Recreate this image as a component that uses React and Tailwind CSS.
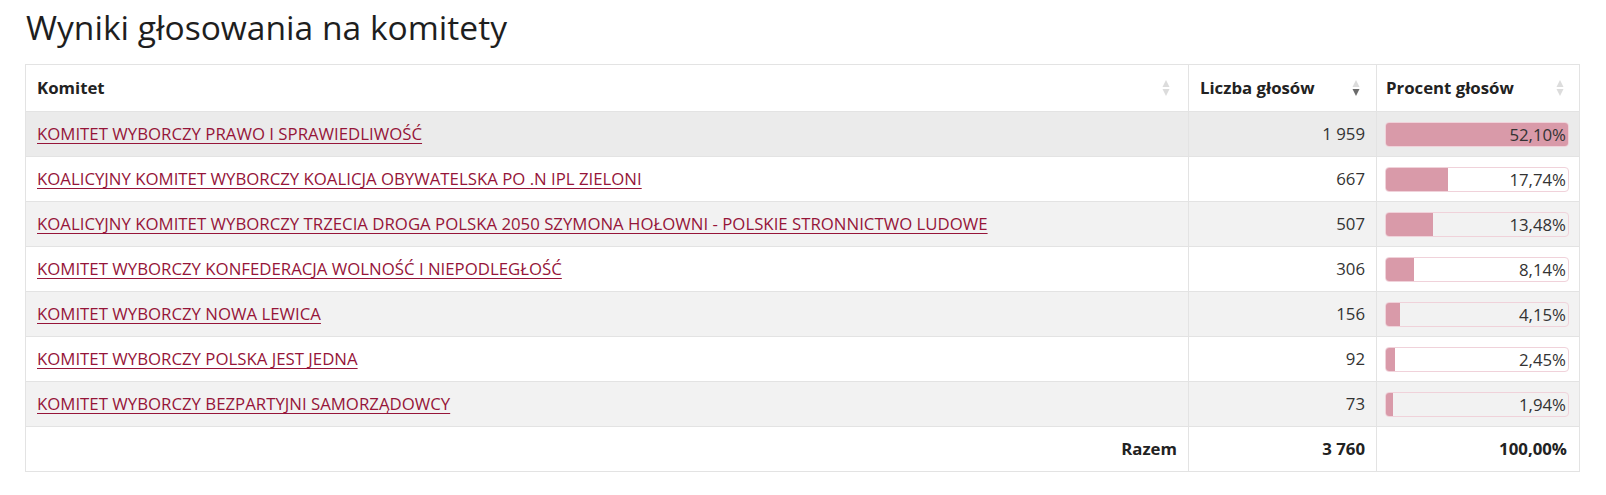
import React from "react";

const rows = [
  { name: "KOMITET WYBORCZY PRAWO I SPRAWIEDLIWOŚĆ", votes: "1 959", pct: "52,10%", v: 52.1 },
  { name: "KOALICYJNY KOMITET WYBORCZY KOALICJA OBYWATELSKA PO .N IPL ZIELONI", votes: "667", pct: "17,74%", v: 17.74 },
  { name: "KOALICYJNY KOMITET WYBORCZY TRZECIA DROGA POLSKA 2050 SZYMONA HOŁOWNI - POLSKIE STRONNICTWO LUDOWE", votes: "507", pct: "13,48%", v: 13.48 },
  { name: "KOMITET WYBORCZY KONFEDERACJA WOLNOŚĆ I NIEPODLEGŁOŚĆ", votes: "306", pct: "8,14%", v: 8.14 },
  { name: "KOMITET WYBORCZY NOWA LEWICA", votes: "156", pct: "4,15%", v: 4.15 },
  { name: "KOMITET WYBORCZY POLSKA JEST JEDNA", votes: "92", pct: "2,45%", v: 2.45 },
  { name: "KOMITET WYBORCZY BEZPARTYJNI SAMORZĄDOWCY", votes: "73", pct: "1,94%", v: 1.94 },
];

function SortIcon({ active }) {
  return (
    <svg width="8" height="18" viewBox="0 0 8 18" className="shrink-0">
      <polygon points="4,1 7.5,8 0.5,8" fill="#dcdcdc" />
      <polygon points="0.5,10 7.5,10 4,17" fill={active ? "#6b6b6b" : "#dcdcdc"} />
    </svg>
  );
}

export default function App() {
  const max = 52.1;
  return (
    <div className="bg-white pl-[25px] pr-[26px] pt-[4px] pb-[22px]" style={{ fontFamily: "'Open Sans', sans-serif" }}>
      <h1 className="text-[33.6px] leading-[46px] text-[#1e1e1e] font-normal pl-[1px] mb-[14px]">
        Wyniki głosowania na komitety
      </h1>
      <table className="w-full border-collapse border border-[#e3e3e3] text-[16.8px] text-[#333]">
        <colgroup>
          <col />
          <col className="w-[188px]" />
          <col className="w-[203px]" />
        </colgroup>
        <thead>
          <tr className="h-[47px] bg-white">
            <th className="border border-[#e3e3e3] px-[11px] text-left font-bold text-[#222]">
              <div className="flex items-center justify-between">
                <span>Komitet</span>
                <span className="mr-[7px]"><SortIcon /></span>
              </div>
            </th>
            <th className="border border-[#e3e3e3] px-[11px] text-left font-bold text-[#222]">
              <div className="flex items-center justify-between">
                <span>Liczba głosów</span>
                <span className="mr-[5px]"><SortIcon active /></span>
              </div>
            </th>
            <th className="border border-[#e3e3e3] pr-[11px] pl-[9px] text-left font-bold text-[#222]">
              <div className="flex items-center justify-between">
                <span>Procent głosów</span>
                <span className="mr-[4px]"><SortIcon /></span>
              </div>
            </th>
          </tr>
        </thead>
        <tbody>
          {rows.map((r, i) => (
            <tr
              key={i}
              className={
                "h-[45px] " +
                (i === 0 ? "bg-[#ebebeb]" : i % 2 === 0 ? "bg-[#f2f2f2]" : "bg-white")
              }
            >
              <td className="border border-[#e3e3e3] px-[11px]">
                <a href="#" className="text-[#961539] underline underline-offset-[3px] decoration-[1px]">
                  {r.name}
                </a>
              </td>
              <td className="border border-[#e3e3e3] px-[11px] text-right">{r.votes}</td>
              <td className="border border-[#e3e3e3] pl-[8px] pr-[10px]">
                <div className="relative h-[25px] rounded-[4px] border border-[#f0d2da] overflow-hidden">
                  <div className="absolute inset-y-0 left-0 bg-[#d99aa9]" style={{ width: `${(r.v / max) * 100}%` }} />
                  <div className="relative text-right pr-[2px] leading-[23px]">{r.pct}</div>
                </div>
              </td>
            </tr>
          ))}
          <tr className="h-[45px] bg-white font-bold text-[#222]">
            <td className="border border-[#e3e3e3] px-[11px] text-right">Razem</td>
            <td className="border border-[#e3e3e3] px-[11px] text-right">3 760</td>
            <td className="border border-[#e3e3e3] px-[12px] text-right">100,00%</td>
          </tr>
        </tbody>
      </table>
    </div>
  );
}
